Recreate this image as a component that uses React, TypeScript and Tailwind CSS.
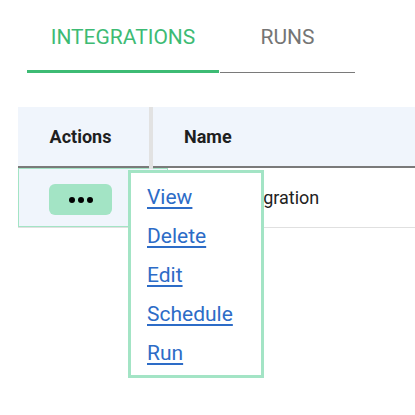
export default function App() {
  const menuItems = ["View", "Delete", "Edit", "Schedule", "Run"];

  return (
    <div className="relative w-[415px] h-[415px] overflow-hidden bg-white font-['Roboto',sans-serif]">
      {/* Tabs */}
      <div className="flex items-end ml-[27px]">
        <div className="w-[192px] h-[73px] flex items-center justify-center pt-[6px] border-b-[3px] border-[#3dbb74] text-[21px] text-[#3dbb74]">
          INTEGRATIONS
        </div>
        <div className="w-[135px] h-[73px] ml-px flex items-center justify-center pt-[4px] border-b border-[#7a7a7a] text-[21px] text-[#757575]">
          RUNS
        </div>
      </div>

      {/* Table */}
      <div className="relative mt-[34px] ml-[18px] w-[420px]">
        <div className="flex h-[61px] bg-[#f0f5fc] border-b-2 border-[#7a7a7a]">
          <div className="w-[131px] flex items-center justify-center pr-[6px] text-[18px] font-bold text-[#1f1f1f]">
            Actions
          </div>
          <div className="w-[4px]" />
          <div className="flex-1 flex items-center pl-[31px] text-[18px] font-bold text-[#1f1f1f]">
            Name
          </div>
        </div>
        <div className="absolute left-[131px] top-0 w-[4px] h-[62px] bg-[#e2e2e2]" />

        <div className="flex h-[60px] border-b border-[#e0e0e0]">
          <div className="w-[150px] flex items-center pl-[30px] bg-[#f0f5fc] border border-[#a3e4c5]">
            <button className="w-[63px] h-[31px] mt-[4px] flex items-center justify-center gap-[3px] rounded-[6px] bg-[#a3e4c5]">
              <span className="w-[6px] h-[6px] rounded-full bg-black" />
              <span className="w-[6px] h-[6px] rounded-full bg-black" />
              <span className="w-[6px] h-[6px] rounded-full bg-black" />
            </button>
          </div>
          <div className="flex-1 flex items-center pl-[13px] text-[18px] text-[#222]">
            Demo Integration
          </div>
        </div>

        {/* Actions menu */}
        <div className="absolute left-[110px] top-[63px] w-[136px] h-[208px] bg-white border-[3px] border-[#a3e4c5] pl-[16px] pt-[10px] flex flex-col gap-[11px]">
          {menuItems.map((item) => (
            <a
              key={item}
              href="#"
              className="text-[21px] leading-[28px] text-[#2d6cc7] underline decoration-2 underline-offset-[3px]"
            >
              {item}
            </a>
          ))}
        </div>
      </div>
    </div>
  );
}
